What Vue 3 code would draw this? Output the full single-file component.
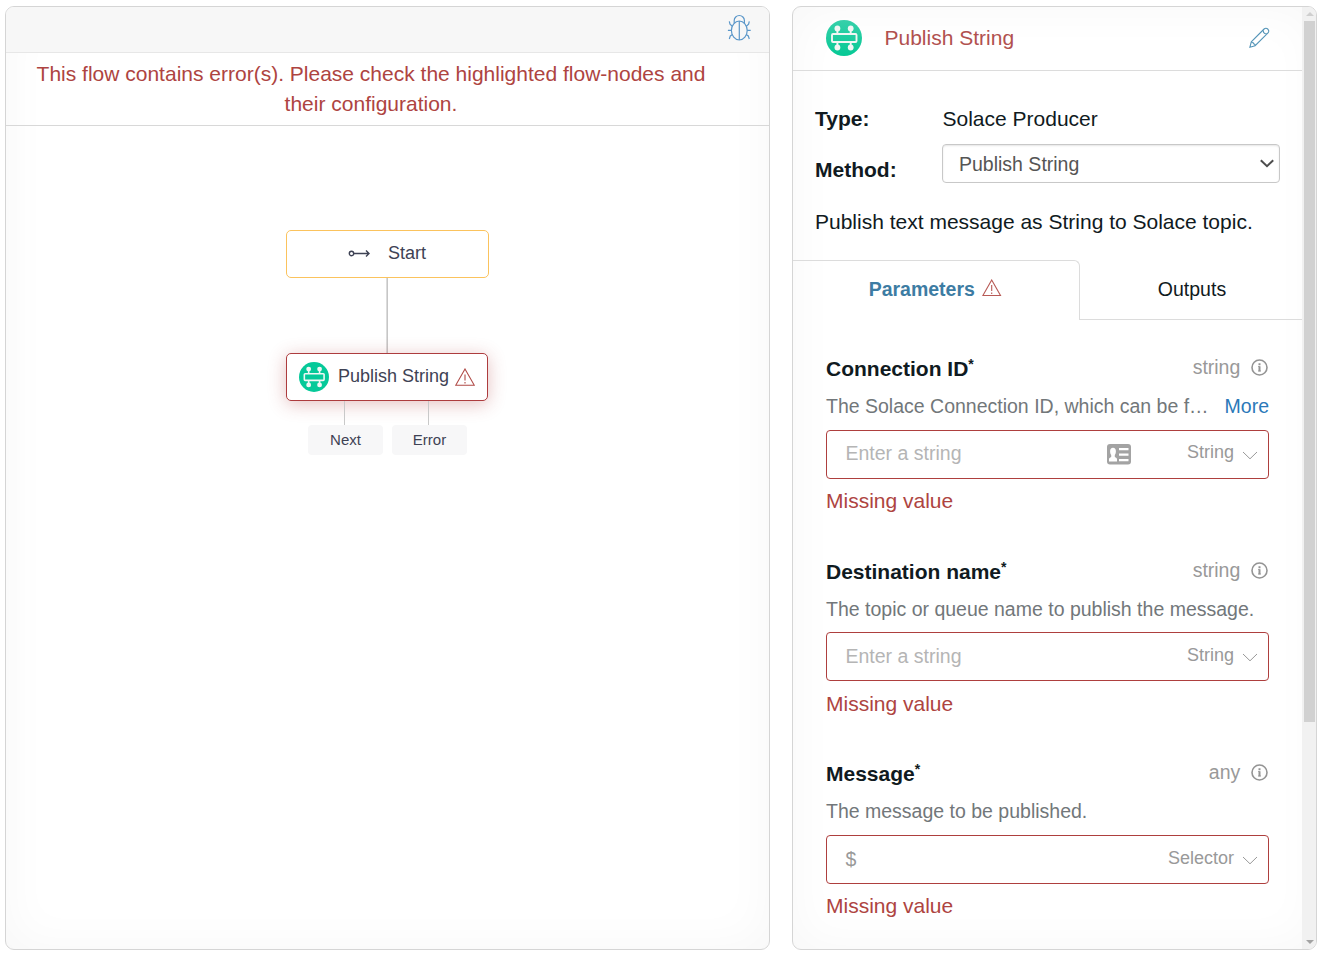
<script setup>
const fields = [
  {
    label: 'Connection ID',
    type: 'string',
    help: 'The Solace Connection ID, which can be f…',
    more: true,
    placeholder: 'Enter a string',
    card: true,
    mode: 'String'
  },
  {
    label: 'Destination name',
    type: 'string',
    help: 'The topic or queue name to publish the message.',
    placeholder: 'Enter a string',
    mode: 'String'
  },
  {
    label: 'Message',
    type: 'any',
    help: 'The message to be published.',
    placeholder: '$',
    selector: true,
    mode: 'Selector'
  }
]
</script>

<template>
  <main class="workspace">
    <section class="panel flow">
      <header class="toolbar">
        <svg class="bug" width="24" height="28" viewBox="0 0 24 28" fill="none" stroke="#5b97c9" stroke-width="1.2">
          <ellipse cx="12.300" cy="16.500" rx="7.900" ry="9.500" />
          <path d="M12.300 7v19M7.200 9V6.600a5.100 5.100 0 0 1 10.200 0V9M4.400 16.300H.9M20.200 16.300h3.500M5.300 12.200 3 10.200 2.300 7.300M19.300 12.200l2.300-2 .7-2.900M5.500 20.500 3.300 22l-1 3M19.100 20.500l2.200 1.500 1 3" />
        </svg>
      </header>
      <p class="flow-error">This flow contains error(s). Please check the highlighted flow-nodes and their configuration.</p>
      <div class="canvas">
        <div class="node start">
          <svg width="22" height="10" viewBox="0 0 22 10" fill="none" stroke="#3e4254" stroke-width="1.400">
            <circle cx="3.500" cy="5.500" r="2.200" />
            <path d="M5.700 5.500H21M18 2.500 21 5.500l-3 3" />
          </svg>
          <span>Start</span>
        </div>
        <div class="wire"></div>
        <div class="node publish">
          <svg class="logo" width="30" height="30" viewBox="0 0 36 36">
            <circle cx="18" cy="18" r="18" fill="#05c999" />
            <g fill="none" stroke="#f1f6f4" stroke-width="1.900">
              <rect x="6.400" y="14" width="23.700" height="8" rx="1" />
              <path d="M11.600 9v5M24.700 9v5M11.600 22v5M24.700 22v5" />
            </g>
            <g fill="#f1f6f4"><circle cx="11.600" cy="8.500" r="2.900" /><circle cx="24.700" cy="8.500" r="2.900" /><circle cx="11.600" cy="27.500" r="2.900" /><circle cx="24.700" cy="27.500" r="2.900" /></g>
          </svg>
          <span>Publish String</span>
          <svg class="warn" width="20" height="18" viewBox="0 0 20 18" fill="none" stroke="#b04a46" stroke-width="1.100">
            <path d="M10 1 19.300 17.300H.7ZM10 6.500v6M10 14v1.600" />
          </svg>
        </div>
        <div class="ports">
          <div class="port"><i></i><span>Next</span></div>
          <div class="port"><i></i><span>Error</span></div>
        </div>
      </div>
    </section>

    <section class="panel details">
      <div class="content">
        <header class="title">
          <svg width="36" height="36" viewBox="0 0 36 36">
            <defs>
              <linearGradient id="green" x1="0" y1="0" x2="0" y2="1"><stop offset="0" stop-color="#37d0aa" /><stop offset="1" stop-color="#05c995" /></linearGradient>
            </defs>
            <circle cx="18" cy="18" r="18" fill="url(#green)" />
            <g fill="none" stroke="#f1f6f4" stroke-width="1.900">
              <rect x="6" y="14" width="24.500" height="8" rx="1" />
              <path d="M11.400 9v5M24.700 9v5M11.400 22v5M24.700 22v5" />
            </g>
            <g fill="#f1f6f4"><circle cx="11.400" cy="8.500" r="2.900" /><circle cx="24.700" cy="8.500" r="2.900" /><circle cx="11.400" cy="27.500" r="2.900" /><circle cx="24.700" cy="27.500" r="2.900" /></g>
          </svg>
          <h1>Publish String</h1>
          <svg width="21" height="21" viewBox="0 0 21 21" fill="none" stroke="#5595b8" stroke-width="1.100">
            <path d="M.9 20.200 2.300 14.900 15.100 2c1-1 2.600-1 3.600 0l.3.300c1 1 1 2.600 0 3.600L6.100 18.700ZM2.300 14.900l1.700.5.400 1.300 1.300.5.4 1.500M14.100 3l.5 2.400 1.200 1.200 2.200.3" />
          </svg>
        </header>

        <div class="row type"><b>Type:</b><span>Solace Producer</span></div>
        <div class="row method">
          <b>Method:</b>
          <div class="select">
            <span>Publish String</span>
            <svg width="16" height="10" viewBox="0 0 16 10" fill="none" stroke="#4d4d4d" stroke-width="2"><path d="m1.800 1.200 6.200 6 6.200-6" /></svg>
          </div>
        </div>
        <p class="about">Publish text message as String to Solace topic.</p>

        <nav class="tabs">
          <div class="tab active">
            <span>Parameters</span>
            <svg width="20" height="18" viewBox="0 0 20 18" fill="none" stroke="#b85a56" stroke-width="1.100">
              <path d="M9.700 1 18.500 16.500H.9ZM9.700 6v6M9.700 13.500v1.600" />
            </svg>
          </div>
          <div class="tab outputs">Outputs</div>
        </nav>

        <div class="fields">
          <div v-for="f in fields" :key="f.label" class="field">
            <div class="head">
              <label>{{ f.label }}<sup>*</sup></label>
              <span class="kind">{{ f.type }}</span>
              <svg width="17" height="17" viewBox="0 0 17 17" fill="none" stroke="#949494">
                <circle cx="8.500" cy="8.500" r="7.500" stroke-width="1.600" />
                <path d="M7.300 7.500h1.200M7.100 12h2.800" stroke-width="1" />
                <path d="M8.500 4.200v2M8.500 7.200v5" stroke-width="2" />
              </svg>
            </div>
            <div class="help"><span>{{ f.help }}</span><a v-if="f.more">More</a></div>
            <div class="input">
              <span class="placeholder" :class="{ selector: f.selector }">{{ f.placeholder }}</span>
              <svg v-if="f.card" class="card" width="24" height="21" viewBox="0 0 24 21">
                <rect width="24" height="20.500" rx="3" fill="#a3a3a3" />
                <path d="M2 17.500v-2.200c0-1.300.8-1.800 2.200-2.400V11C3.500 10.200 3.100 8.700 3.100 7.200c0-2 1-3.500 2.900-3.500s2.900 1.500 2.900 3.500c0 1.500-.4 3-1.100 3.800v1.900c1.400.6 2.200 1.100 2.200 2.400v2.200ZM12 4h9.500v2.200H12ZM12 9.500h9.500v2.200H12ZM12 15h9.500v2.200H12Z" fill="#fff" />
              </svg>
              <span class="mode">{{ f.mode }}</span>
              <svg class="chev" width="16" height="9" viewBox="0 0 16 9" fill="none" stroke="#999" stroke-width="1"><path d="m1 1 7 6.800L15 1" /></svg>
            </div>
            <div class="missing">Missing value</div>
          </div>
        </div>
      </div>
      <div class="scrollbar">
        <i class="up"></i>
        <div class="thumb"></div>
        <i class="down"></i>
      </div>
    </section>
  </main>
</template>

<style>
body { background: #fff; }
</style>

<style scoped>
* { box-sizing: border-box; }
.workspace {
  display: flex;
  gap: 22px;
  width: 1323px;
  height: 957px;
  padding: 6px 6px 7px 5px;
  overflow: hidden;
  font-family: "Liberation Sans", Arial, sans-serif;
  font-size: 21px;
  color: #101a21;
}
.panel {
  height: 944px;
  border: 1px solid #d5d5d5;
  border-radius: 9px;
  overflow: hidden;
  box-shadow: inset 0 0 50px rgba(0, 0, 0, 0.035);
}
.flow { width: 765px; }
.toolbar {
  display: flex;
  justify-content: flex-end;
  height: 46px;
  padding: 7px 18px 0 0;
  background: #f7f7f7;
  border-bottom: 1px solid #e7e7e7;
}
.flow-error {
  width: 100%;
  height: 73px;
  margin: 0;
  padding: 6px 63px 0 30px;
  border-bottom: 1px solid #d8d8d8;
  line-height: 30px;
  text-align: center;
  color: #ae4441;
}
.canvas { display: flex; flex-direction: column; padding: 104px 0 0 280px; color: #3e4254; font-size: 18px; }
.node { display: flex; align-items: center; height: 48px; border-radius: 5px; background: #fff; }
.start { width: 203px; border: 1px solid #fbc35d; padding: 0 0 2px 61px; }
.start span { margin-left: 18px; }
.wire { width: 2px; height: 75px; margin-left: 100px; background: linear-gradient(90deg, #e4e4e4 50%, #c3c3c3 50%); }
.wire { margin-left: 100px; background: linear-gradient(90deg, #dcdcdc 50%, #c6c6c6 50%); }
.publish { width: 202px; border: 1px solid #ad3c3e; padding-left: 12px; box-shadow: 0 3px 18px rgba(174, 60, 60, 0.32); }
.publish span { margin: 0 6px 2px 9px; white-space: nowrap; }
.warn { flex: none; }
.logo { flex: none; }
.ports { display: flex; gap: 9px; padding-left: 22px; }
.port { display: flex; flex-direction: column; width: 75px; }
.port i { width: 1px; height: 24px; margin-left: 36px; background: #c9c9c9; }
.port span { height: 30px; line-height: 30px; border-radius: 4px; background: #f7f7f8; text-align: center; font-size: 15px; }

.details { display: flex; width: 525px; }
.content { width: 509px; height: 942px; }
.title { display: flex; align-items: center; height: 64px; padding: 0 32px 2px 33px; border-bottom: 1px solid #dcdcdc; }
.title h1 { flex: 1; margin: 0 0 0 22.500px; font-size: 21px; font-weight: 400; color: #b1514f; }
.row { display: flex; padding: 0 22px; line-height: 30px; }
.row b { width: 127px; }
.type { margin-top: 33px; }
.type span { margin-left: 0.500px; }
.method { margin-top: 10px; height: 39px; }
.method b { padding-top: 11px; }
.select {
  display: flex;
  align-items: center;
  justify-content: space-between;
  width: 338px;
  height: 39px;
  padding: 0 4px 0 16px;
  border: 1px solid #c8c8c8;
  border-radius: 4px;
  background: #fff;
  box-shadow: inset 0 1px 2px rgba(0, 0, 0, 0.1);
  font-size: 19.500px;
  color: #555;
}
.about { margin: 24px 0 23px; padding-left: 22px; line-height: 30px; white-space: nowrap; }
.tabs { display: flex; height: 60px; font-size: 19.500px; line-height: 57px; }
.tab { flex: 1; border-bottom: 1px solid #dcdcdc; text-align: center; }
.outputs { padding: 1px 0 0 2px; }
.tab.active {
  display: flex;
  flex: none;
  justify-content: center;
  gap: 7px;
  width: 287px;
  padding-right: 1.500px;
  border: solid #dcdcdc;
  border-width: 1px 1px 0 0;
  border-top-right-radius: 6px;
  color: #3d7ca3;
  font-weight: 700;
}
.tab.active svg { margin-top: 18px; }
.fields { padding: 34px 33px 0; }
.field { height: 202.500px; }
.head { display: flex; height: 30px; align-items: center; }
.head label { flex: 1; font-weight: 700; line-height: 30px; }
.head sup { font-size: 14px; line-height: 0; vertical-align: 7px; }
.kind { margin-right: 10.700px; padding-bottom: 3px; color: #999; font-size: 19.500px; }
.head svg { margin: 0 1px 3px 0; }
.help { display: flex; justify-content: space-between; height: 30px; margin-top: 7px; line-height: 30px; color: #72777a; font-size: 19.500px; white-space: nowrap; }
.help a { color: #2b79b9; }
.input { display: flex; align-items: center; height: 49px; margin-top: 8.900px; padding: 0 10px 0 18.500px; border: 1px solid #ae3f3e; border-radius: 4px; background: #fff; }
.placeholder { flex: 1; padding-bottom: 1.600px; color: #b5b5b5; font-size: 19.500px; }
.placeholder.selector { padding-bottom: 0; color: #999; }
.card { margin-right: 56px; }
.mode { padding-bottom: 3.600px; font-size: 18px; color: #999; }
.selector ~ .mode { padding-bottom: 2px; }
.chev { margin: 2px 0 0 8px; }
.missing { margin-top: 7.300px; line-height: 30px; color: #ae4441; }

.scrollbar { display: flex; flex-direction: column; width: 14px; height: 942px; padding: 5px 1px 5px 2px; background: #f1f1f1; }
.scrollbar i { width: 0; height: 0; margin-left: 2px; border: solid transparent; border-width: 0 4px; }
.scrollbar .up { border-bottom: 4px solid #cfcfcf; }
.scrollbar .thumb { width: 11px; height: 701px; margin: 5px 0 auto; background: #d1d1d1; }
.scrollbar .down { border-top: 4px solid #a3a3a3; }
</style>
